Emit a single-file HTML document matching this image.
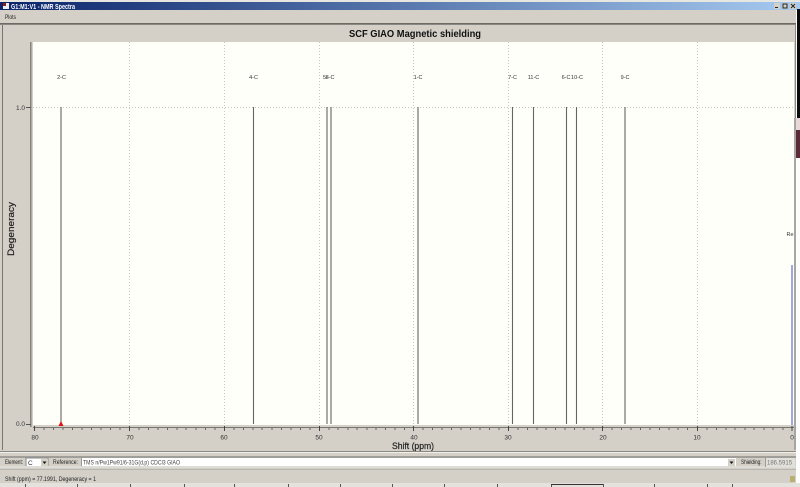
<!DOCTYPE html>
<html>
<head>
<meta charset="utf-8">
<style>
html,body{margin:0;padding:0;background:#d4d0c8;}
body{width:800px;height:487px;overflow:hidden;position:relative;}
svg{position:absolute;left:0;top:0;display:block;filter:blur(0.3px);}
text{font-family:"Liberation Sans",sans-serif;}
</style>
</head>
<body>
<svg width="800" height="487" viewBox="0 0 800 487" xmlns="http://www.w3.org/2000/svg">
<defs>
<linearGradient id="tb" x1="0" x2="1" y1="0" y2="0">
<stop offset="0" stop-color="#0a246a"/>
<stop offset="1" stop-color="#a6caf0"/>
</linearGradient>
</defs>
<rect width="800" height="487" fill="#d4d0c8"/>
<rect x="0" y="0" width="800" height="2" fill="#e8e6e0"/>
<rect x="0" y="2" width="800" height="8" fill="url(#tb)"/>
<rect x="3" y="3" width="6" height="6" fill="#eee"/>
<rect x="3" y="3" width="3" height="3" fill="#8a2020"/>
<text x="11" y="9" font-size="7.5" font-weight="bold" fill="#fff" textLength="64" lengthAdjust="spacingAndGlyphs">G1:M1:V1 - NMR Spectra</text>
<rect x="774" y="3" width="6" height="6" fill="#d4d0c8"/><rect x="775" y="7" width="3" height="1" fill="#222"/>
<rect x="782" y="3" width="6" height="6" fill="#d4d0c8"/><rect x="783" y="4" width="4" height="4" fill="none" stroke="#222" stroke-width="1"/>
<rect x="790" y="3" width="6" height="6" fill="#d4d0c8"/><path d="M791 4l4 4M795 4l-4 4" stroke="#222" stroke-width="1"/>
<text x="5" y="19" font-size="6.500" fill="#222" textLength="11" lengthAdjust="spacingAndGlyphs">Plots</text>
<rect x="0" y="23" width="796" height="1" fill="#6c6a64"/>
<rect x="0" y="24" width="796" height="1" fill="#8a8882"/>
<rect x="2" y="25" width="1" height="425" fill="#77756f"/>
<rect x="795" y="25" width="1" height="425" fill="#8a8882"/>
<rect x="796" y="10" width="4" height="108" fill="#fdfdfb"/>
<rect x="797" y="9" width="3" height="109" fill="#0c0c0c"/>
<rect x="796" y="118" width="4" height="12" fill="#e8d8d8"/>
<rect x="796" y="130" width="4" height="28" fill="#5a2a38"/>
<rect x="796" y="158" width="4" height="329" fill="#fdfdfb"/>
<rect x="794" y="118" width="2" height="332" fill="#a8a6a2"/>
<text x="415" y="37" font-size="10" font-weight="bold" fill="#111" text-anchor="middle" textLength="132" lengthAdjust="spacingAndGlyphs">SCF GIAO Magnetic shielding</text>

<rect x="33" y="42" width="761" height="383" fill="#fffffa"/>
<rect x="30" y="42" width="1.500" height="385" fill="#85837d"/>
<g stroke="#c9c8c0" stroke-width="1" stroke-dasharray="1 2" fill="none">
<path d="M129.500 42V424M224.500 42V424M319.500 42V424M413.500 42V424M508.500 42V424M602.500 42V424M697.500 42V424"/>
<path d="M33 107.500H794"/>
</g>
<g stroke="#666660" stroke-width="1.100">
<path d="M61 107V424M253.500 107V424M327 107V424M331 107V424M418 107V424M512.500 107V424M533.500 107V424M566.500 107V424M576.500 107V424M625 107V424"/>
</g>
<rect x="791" y="265" width="2" height="160" fill="#a6a4dc"/>
<path d="M61 421l-2.500 5h5z" fill="#dd1111"/>
<g font-size="5.500" fill="#333" text-anchor="middle">
<text x="61.500" y="79">2-C</text>
<text x="253.500" y="79">4-C</text>
<text x="325.500" y="79">5-</text>
<text x="330" y="79">8-C</text>
<text x="418" y="79">1-C</text>
<text x="512.500" y="79">7-C</text>
<text x="533.500" y="79">11-C</text>
<text x="566" y="79">6-C</text>
<text x="577" y="79">10-C</text>
<text x="625" y="79">9-C</text>
<text x="790" y="236">Re</text>
</g>
<g font-size="6.500" fill="#333" text-anchor="end">
<text x="25" y="110">1.0</text>
<text x="25" y="426">0.0</text>
</g>
<path d="M26 107.500H31M26 424.500H31" stroke="#555" stroke-width="1"/>
<path d="M33 427.500H794" stroke="#77756f" stroke-width="1"/>
<path d="M34.500 426V431M129.500 426V431M224.500 426V431M319.500 426V431M413.500 426V431M508.500 426V431M602.500 426V431M697.500 426V431M792 426V431" stroke="#444" stroke-width="1"/>
<path d="M44 428V430M53.500 428V430M63 428V430M72.500 428V430M82 428V430M91.500 428V430M101 428V430M110.500 428V430M120 428V430M139 428V430M148.500 428V430M158 428V430M167.500 428V430M177 428V430M186 428V430M196 428V430M205.500 428V430M215 428V430M234 428V430M243.500 428V430M253 428V430M262 428V430M272 428V430M281.500 428V430M291 428V430M300.500 428V430M310 428V430M329 428V430M338 428V430M348 428V430M357 428V430M367 428V430M376 428V430M385.500 428V430M395 428V430M404.500 428V430M423 428V430M432.500 428V430M442 428V430M451.500 428V430M461 428V430M470.500 428V430M480 428V430M489.500 428V430M499 428V430M518 428V430M527.500 428V430M537 428V430M546 428V430M555.500 428V430M565 428V430M574.500 428V430M584 428V430M593 428V430M612 428V430M621.500 428V430M631 428V430M640.500 428V430M650 428V430M659.500 428V430M669 428V430M678 428V430M687.500 428V430M707 428V430M716.500 428V430M726 428V430M735 428V430M745 428V430M754 428V430M764 428V430M773 428V430M783 428V430" stroke="#666" stroke-width="1"/>
<g font-size="6.500" fill="#333" text-anchor="middle">
<text x="35" y="439.500">80</text>
<text x="130" y="439.500">70</text>
<text x="224" y="439.500">60</text>
<text x="319" y="439.500">50</text>
<text x="414" y="439.500">40</text>
<text x="508" y="439.500">30</text>
<text x="603" y="439.500">20</text>
<text x="697" y="439.500">10</text>
<text x="792" y="439.500">0</text>
</g>
<text x="392" y="449" font-size="9" fill="#222" stroke="#222" stroke-width="0.2" textLength="42" lengthAdjust="spacingAndGlyphs">Shift (ppm)</text>
<text transform="translate(14 256) rotate(-90)" font-size="9" fill="#222" stroke="#222" stroke-width="0.2" textLength="54" lengthAdjust="spacingAndGlyphs">Degeneracy</text>

<rect x="0" y="451" width="796" height="1" fill="#8a8882"/>
<rect x="0" y="452" width="796" height="1" fill="#f2f0ea"/>
<rect x="0" y="456" width="796" height="2" fill="#a09e98"/>
<text x="5" y="464" font-size="6.500" fill="#222" textLength="18" lengthAdjust="spacingAndGlyphs">Element:</text>
<rect x="26" y="458" width="22" height="9" fill="#fff" stroke="#888" stroke-width="1"/>
<text x="28" y="465" font-size="6.500" fill="#333">C</text>
<rect x="41" y="459" width="7" height="7" fill="#d4d0c8"/><path d="M42.500 461.500h4l-2 2.500z" fill="#111"/>
<text x="53" y="464" font-size="6.500" fill="#222" textLength="25" lengthAdjust="spacingAndGlyphs">Reference:</text>
<rect x="81" y="458" width="655" height="8" fill="#fff"/>
<path d="M81.500 458V466" stroke="#999" stroke-width="1"/>
<rect x="0" y="466" width="796" height="2" fill="#dedcd6"/>
<text x="83" y="464.500" font-size="6" fill="#444" textLength="97" lengthAdjust="spacingAndGlyphs">TMS n/Pw1Pw91/6-31G(d,p) CDCl3 GIAO</text>
<rect x="728" y="459" width="7" height="7" fill="#d4d0c8"/><path d="M729.500 461.500h4l-2 2.500z" fill="#111"/>
<text x="741" y="464" font-size="6.500" fill="#222" textLength="20.500" lengthAdjust="spacingAndGlyphs">Shielding:</text>
<rect x="765" y="458" width="30" height="9" fill="#e2e0da"/>
<path d="M765.500 458V467" stroke="#999" stroke-width="1"/>
<text x="767" y="464.500" font-size="6" fill="#777">186.5915</text>
<rect x="0" y="469" width="796" height="1" fill="#b8b6b0"/>
<text x="5" y="481" font-size="6.500" fill="#222" textLength="91" lengthAdjust="spacingAndGlyphs">Shift (ppm) = 77.1991, Degeneracy = 1</text>
<rect x="790" y="476" width="5" height="6" fill="#b8b070"/>
<rect x="0" y="483" width="800" height="4" fill="#e4e2dc"/>
<path d="M25.500 484V487M77.500 484V487M130.500 484V487M184.500 484V487M234.500 484V487M288.500 484V487M340.500 484V487M392.500 484V487M444.500 484V487M497.500 484V487M551.500 484V487M603.500 484V487M654.500 484V487M707.500 484V487M732.500 484V487" stroke="#555" stroke-width="1"/>
<rect x="551" y="484" width="52" height="1" fill="#333"/>
</svg>
</body>
</html>
